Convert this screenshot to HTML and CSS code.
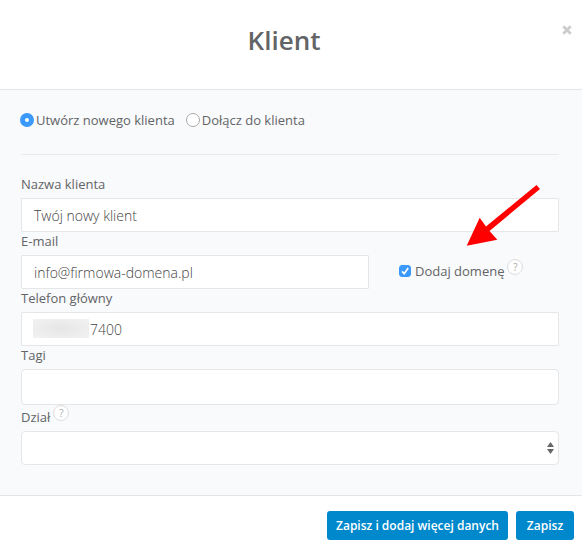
FILE: index.html
```
<!DOCTYPE html>
<html lang="pl">
<head>
  <meta charset="UTF-8">
  <meta name="viewport" content="width=device-width, initial-scale=1.0">
  <title>Klient</title>
  <link rel="stylesheet" href="styles.css">
</head>
<body>
  <form class="modal">
    <!-- Header -->
    <div class="modal-header">
      <h1>Klient</h1>
      <button type="button" class="close" aria-label="Zamknij">
        <svg width="10" height="10" viewBox="0 0 10 10"><path d="M1.3 1.3L8.7 8.7M8.7 1.3L1.3 8.7" stroke="#ccc" stroke-width="2.7"/></svg>
      </button>
    </div>

    <!-- Fields -->
    <div class="modal-body">
      <div class="mode">
        <label><input type="radio" name="mode" checked>Utwórz nowego klienta</label>
        <label><input type="radio" name="mode">Dołącz do klienta</label>
      </div>

      <label class="field-label" for="name">Nazwa klienta</label>
      <input class="field" type="text" id="name" value="Twój nowy klient">

      <label class="field-label" for="email">E-mail</label>
      <div class="email-row">
        <input class="field" type="text" id="email" value="info@firmowa-domena.pl">
        <div class="domain">
          <span class="check">
            <input type="checkbox" id="domain" checked>
            <svg width="12" height="12" viewBox="0 0 12 12"><path d="M3 6.4L5.2 8.7L9.2 3" fill="none" stroke="#fff" stroke-width="1.7"/></svg>
          </span>
          <label for="domain">Dodaj domenę</label>
          <button type="button" class="help">?</button>
          <svg class="arrow" width="74" height="62" viewBox="0 0 74 62">
            <path d="M70.5 1L74 5L23.5 47L31.3 55.7L0.7 61.7L13.7 33.7L20 42.5Z" fill="#f00"/>
          </svg>
        </div>
      </div>

      <label class="field-label" for="phone">Telefon główny</label>
      <div class="phone">
        <input class="field" type="text" id="phone" value="7400">
        <span class="mask"></span>
      </div>

      <label class="field-label" for="tags">Tagi</label>
      <input class="field tags" type="text" id="tags">

      <div class="label-row">
        <label for="department">Dział</label>
        <button type="button" class="help">?</button>
      </div>
      <div class="select">
        <select class="field" id="department"><option></option></select>
        <svg width="7" height="12" viewBox="0 0 7 12"><path d="M3.5 0L7 5H0ZM0 7H7L3.5 12Z" fill="#666"/></svg>
      </div>
    </div>

    <!-- Footer -->
    <div class="modal-footer">
      <button type="button" class="btn">Zapisz i dodaj więcej danych</button>
      <button type="submit" class="btn">Zapisz</button>
    </div>
  </form>
</body>
</html>
```
FILE: styles.css
```
* {
  box-sizing: border-box;
}
body {
  margin: 0;
  background: #fff;
  color: #626466;
  font-family: "Open Sans", sans-serif;
  font-size: 13px;
  line-height: 20px;
}
button, input, select {
  font-family: inherit;
  color: inherit;
  margin: 0;
}

/* Header */
.modal-header {
  position: relative;
  padding: 22px 30px 31px 16px;
  text-align: center;
  border-bottom: 1px solid #e5e5e5;
}
.modal-header h1 {
  margin: 0;
  font-size: 26px;
  font-weight: 600;
  line-height: 36px;
}
.close {
  position: absolute;
  top: 25px;
  right: 10px;
  padding: 0;
  border: none;
  background: none;
  cursor: pointer;
}
.close svg {
  display: block;
}

/* Fields */
.modal-body {
  padding: 20px 23px 30px 21px;
  background: #f9fafc;
  border-bottom: 1px solid #e5e5e5;
}
.mode {
  display: flex;
  gap: 12px;
  padding-bottom: 24px;
  margin-bottom: 20px;
  border-bottom: 1px solid #e7eaec;
}
.mode label {
  display: flex;
  align-items: center;
  gap: 2px;
}
.mode input {
  appearance: none;
  width: 14px;
  height: 14px;
  margin-left: -1px;
  border: 1px solid #aaa;
  border-radius: 50%;
  background: #fff;
}
.mode input:checked {
  border: 5px solid #3b99fc;
}
.field-label {
  display: block;
  height: 23px;
  line-height: 18px;
}
.field {
  display: block;
  width: 100%;
  height: 34px;
  padding: 0 12px;
  border: 1px solid #e5e6e7;
  border-radius: 1px;
  background: #fff;
  color: #444;
  font-size: 14px;
  font-weight: 300;
}
.email-row {
  display: grid;
  grid-template-columns: 1fr 160px;
  gap: 30px;
}
.domain {
  position: relative;
  display: flex;
  align-items: center;
  height: 32px;
}
.check {
  position: relative;
  width: 12px;
  height: 12px;
  margin-right: 4px;
}
.check input {
  appearance: none;
  display: block;
  width: 12px;
  height: 12px;
  border: 1px solid #aaa;
  border-radius: 3px;
  background: #fff;
}
.check input:checked {
  border-color: #3b99fc;
  background: #3b99fc;
}
.check svg {
  position: absolute;
  left: 0;
  top: 0;
  pointer-events: none;
}
.help {
  width: 16px;
  height: 16px;
  padding: 0;
  margin: 0 0 8px 3px;
  border: 1px solid #ddd;
  border-radius: 50%;
  background: #fff;
  color: #aaa;
  font-size: 10px;
  line-height: 14px;
}
.arrow {
  position: absolute;
  left: 67px;
  top: -71px;
}
.phone {
  position: relative;
}
.phone .field {
  padding-left: 68px;
}
.mask {
  position: absolute;
  left: 12px;
  top: 7px;
  width: 56px;
  height: 19px;
  background: radial-gradient(ellipse at center, #e6e6e6, #f2f2f2);
}
.tags {
  height: 36px;
  border-radius: 4px;
}
.label-row {
  display: flex;
  align-items: center;
  height: 26px;
  padding-bottom: 2px;
}
.select {
  position: relative;
}
.select .field {
  appearance: none;
  border-radius: 4px;
}
.select svg {
  position: absolute;
  right: 5px;
  top: 11px;
  pointer-events: none;
}

/* Footer */
.modal-footer {
  display: flex;
  justify-content: flex-end;
  gap: 8px;
  padding: 15px 8px 9px;
}
.btn {
  min-width: 58px;
  height: 29px;
  padding: 0 9px;
  border: none;
  border-radius: 3px;
  background: #0088cc;
  color: #fff;
  font-size: 12px;
  font-weight: 600;
  cursor: pointer;
}
```
